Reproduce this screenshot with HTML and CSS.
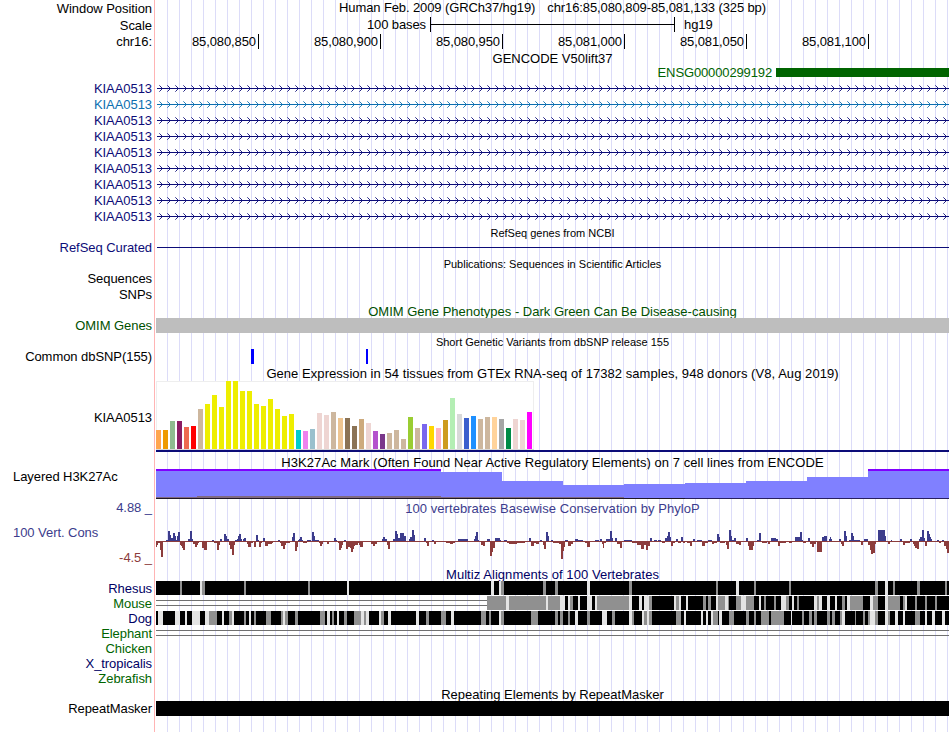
FILE: index.html
```
<!DOCTYPE html>
<html lang="en">
  <head>
    <meta charset="UTF-8" />
    <title>chr16:85,080,809-85,081,133 - Genome Browser</title>
    <link rel="stylesheet" href="styles.css" />
  </head>
  <body>
    <div class="browser">
      <div class="row h17">
        <div class="label">Window Position</div>
        <div class="data title position"><span>Human Feb. 2009 (GRCh37/hg19)</span><span>chr16:85,080,809-85,081,133 (325 bp)</span></div>
      </div>
      <div class="row h17">
        <div class="label">Scale</div>
        <div class="data scale">
          <span class="scale-name">100 bases</span>
          <span class="scale-bar"></span>
          <span>hg19</span>
        </div>
      </div>
      <div class="row h17">
        <div class="label up">chr16:</div>
        <div class="data ruler">
          <span class="first">85,080,850</span>
          <span>85,080,900</span>
          <span>85,080,950</span>
          <span>85,081,000</span>
          <span>85,081,050</span>
          <span>85,081,100</span>
        </div>
      </div>

      <div class="row h14"><div class="label"></div><div class="data title">GENCODE V50lift37</div></div>
      <div class="row h15">
        <div class="label"></div>
        <div class="data ensg"><span>ENSG00000299192</span><i></i></div>
      </div>
      <div id="genes"></div>

      <div class="row h17"><div class="label"></div><div class="data title small">RefSeq genes from NCBI</div></div>
      <div class="row h14">
        <div class="label navy up">RefSeq Curated</div>
        <div class="data refseq"><i></i></div>
      </div>
      <div class="row h17"><div class="label"></div><div class="data title small">Publications: Sequences in Scientific Articles</div></div>
      <div class="row h15"><div class="label up">Sequences</div><div class="data"></div></div>
      <div class="row h16"><div class="label up">SNPs</div><div class="data"></div></div>

      <div class="row h15"><div class="label"></div><div class="data title down omim-green">OMIM Gene Phenotypes - Dark Green Can Be Disease-causing</div></div>
      <div class="row h15">
        <div class="label omim-green">OMIM Genes</div>
        <div class="data omim"></div>
      </div>

      <div class="row h16"><div class="label"></div><div class="data title small down">Short Genetic Variants from dbSNP release 155</div></div>
      <div class="row h15">
        <div class="label">Common dbSNP(155)</div>
        <div class="data"><svg id="snps" width="793" height="15"></svg></div>
      </div>

      <div class="row h17"><div class="label"></div><div class="data title down wide">Gene Expression in 54 tissues from GTEx RNA-seq of 17382 samples, 948 donors (V8, Aug 2019)</div></div>
      <div class="row h73">
        <div class="label">KIAA0513</div>
        <div class="data"><svg id="gtex" width="793" height="73"></svg></div>
      </div>

      <div class="row h15"><div class="label"></div><div class="data title down wide">H3K27Ac Mark (Often Found Near Active Regulatory Elements) on 7 cell lines from ENCODE</div></div>
      <div class="row h30">
        <div class="label left h3k">Layered H3K27Ac</div>
        <div class="data"><svg id="h3k" width="793" height="30"></svg></div>
      </div>

      <div class="row h68">
        <div class="label limits">
          <span class="blue">4.88 _</span>
          <span class="blue left">100 Vert. Cons</span>
          <span class="maroon">-4.5 _</span>
        </div>
        <div class="data cons">
          <div class="title wide blue">100 vertebrates Basewise Conservation by PhyloP</div>
          <svg id="phylop" width="793" height="49"></svg>
        </div>
      </div>

      <div class="row h14"><div class="label"></div><div class="data title wide multiz">Multiz Alignments of 100 Vertebrates</div></div>
      <div class="row h15"><div class="label multiz">Rhesus</div><div class="data"><svg id="rhesus" width="793" height="15"></svg></div></div>
      <div class="row h15"><div class="label green">Mouse</div><div class="data"><svg id="mouse" width="793" height="15"></svg></div></div>
      <div class="row h15"><div class="label multiz">Dog</div><div class="data"><svg id="dog" width="793" height="15"></svg></div></div>
      <div class="row h15"><div class="label green">Elephant</div><div class="data"><svg id="elephant" width="793" height="15"></svg></div></div>
      <div class="row h15"><div class="label green">Chicken</div><div class="data"></div></div>
      <div class="row h15"><div class="label multiz">X_tropicalis</div><div class="data"></div></div>
      <div class="row h15"><div class="label green">Zebrafish</div><div class="data"></div></div>

      <div class="row h15"><div class="label"></div><div class="data title down">Repeating Elements by RepeatMasker</div></div>
      <div class="row h15">
        <div class="label">RepeatMasker</div>
        <div class="data repeat"></div>
      </div>
      <div class="row h16"><div class="label"></div><div class="data"></div></div>
    </div>
    <script src="tracks.js"></script>
  </body>
</html>
```

FILE: styles.css
```
body {
  margin: 0;
  background: #fff;
  font-family: "Liberation Sans", Arial, Helvetica, sans-serif;
  font-size: 13px;
  color: #000;
}
.browser {
  width: 949px;
  height: 732px;
  overflow: hidden;
}
.row {
  display: flex;
}
.label {
  box-sizing: border-box;
  width: 154px;
  padding-right: 2px;
  display: flex;
  align-items: center;
  justify-content: flex-end;
  letter-spacing: -0.06px;
  white-space: nowrap;
}
.label.left {
  justify-content: flex-start;
  padding-left: 13px;
}
.label.up {
  padding-bottom: 2px;
}
.data {
  box-sizing: border-box;
  width: 795px;
  padding-left: 1px;
  border-left: 1px solid #ffb4b4;
  background: repeating-linear-gradient(to right, transparent 0 11px, #dcdcf8 11px 12px) content-box;
  background-origin: content-box;
  white-space: nowrap;
}
.data svg {
  display: block;
}
.title {
  display: flex;
  align-items: center;
  justify-content: center;
}
/* line box is moved, the guide lines behind it stay full height */
.title.down {
  line-height: 17px;
  align-items: flex-start;
}
.title.wide {
  letter-spacing: 0.055px;
}
.position {
  gap: 12px;
  letter-spacing: -0.11px;
  line-height: 15px;
  align-items: flex-start;
}
.small {
  font-size: 11px;
}
.h14 { height: 14px; }
.h15 { height: 15px; }
.h16 { height: 16px; }
.h17 { height: 17px; }
.h30 { height: 30px; }
.h68 { height: 68px; }
.h73 { height: 73px; }
.h17 .title.down { line-height: 19px; }
.h16 .title.down { line-height: 18px; }

/* label colours */
.navy { color: #0c0c78; }
.light-blue { color: #0c6fb0; }
.omim-green { color: #005000; }
.green { color: #006400; }
.multiz { color: #000064; }
.blue { color: #3c3c8c; }
.maroon { color: #8c3c3c; }

/* scale and ruler */
.scale {
  display: flex;
  align-items: flex-start;
  line-height: 15px;
  letter-spacing: -0.1px;
}
.scale-name {
  width: 270px;
  text-align: right;
}
.scale-bar {
  box-sizing: border-box;
  width: 245px;
  height: 15px;
  margin: 0 9px 0 4px;
  border: solid #000;
  border-width: 0 1px;
  background: linear-gradient(#000, #000) 0 7px / 100% 1px no-repeat;
}
.ruler {
  display: flex;
  align-items: flex-start;
}
.ruler span {
  box-sizing: border-box;
  width: 122px;
  height: 15px;
  line-height: 16px;
  padding-right: 2px;
  border-right: 1px solid #000;
  letter-spacing: -0.1px;
  text-align: right;
}
.ruler .first {
  width: 103px;
}

/* gene tracks */
.ensg {
  display: flex;
  align-items: center;
  color: #006400;
}
.ensg span {
  width: 616px;
  letter-spacing: -0.13px;
  text-align: right;
}
.ensg i {
  width: 173px;
  height: 9px;
  margin-left: 4px;
  background: #006400;
}
.refseq {
  display: flex;
  align-items: flex-start;
}
.refseq i {
  width: 792px;
  height: 1px;
  margin: 6px 0 0 1px;
  background: #0c0c78;
}
.omim {
  background: #bebebe content-box;
}
.repeat {
  background: #000 content-box;
}
.h3k {
  padding-bottom: 16px;
}

/* conservation */
.limits {
  flex-direction: column;
  align-items: flex-end;
  justify-content: flex-start;
  padding-top: 1px;
  line-height: 15px;
}
.limits .left {
  align-self: flex-start;
  margin: 10px 0 10px 13px;
}
.cons .title {
  height: 19px;
}
```

FILE: tracks.js
```
const NS = "http://www.w3.org/2000/svg";

function rect(svg, x, y, w, h, fill, opacity) {
  const r = document.createElementNS(NS, "rect");
  r.setAttribute("x", x);
  r.setAttribute("y", y);
  r.setAttribute("width", w);
  r.setAttribute("height", h);
  r.setAttribute("fill", fill);
  if (opacity) r.setAttribute("opacity", opacity);
  svg.appendChild(r);
}

function get(id) {
  return document.getElementById(id);
}

// "x,w,h x,w,h" -> [[x, w, h], ...]
function parse(text) {
  return text.trim().split(/\s+/).map((item) => item.split(",").map(Number));
}

// KIAA0513 transcripts: intron line with strand arrows every 8px
function drawGenes() {
  for (let i = 0; i < 9; i++) {
    const cls = i === 1 ? "light-blue" : "navy";
    const row = document.createElement("div");
    row.className = "row h16 " + cls;
    row.innerHTML = `<div class="label">KIAA0513</div><div class="data"><svg width="793" height="16"></svg></div>`;
    const svg = row.querySelector("svg");
    rect(svg, 1, 8, 792, 1, "currentColor");
    for (let x = 6; x < 793; x += 8) {
      for (let d = 1; d <= 3; d++) {
        const opacity = d === 3 ? 0.6 : 0.9;
        rect(svg, x - d, 8 - d, 1, 1, "currentColor", opacity);
        rect(svg, x - d, 8 + d, 1, 1, "currentColor", opacity);
      }
    }
    get("genes").appendChild(row);
  }
}

function drawGtex() {
  const svg = get("gtex");
  const tan = "#cdb79e";
  const pink = "#eed5d2";
  const yellow = "#eeee00";
  const colors = ["#ffa54f", "#ee9a00", "#8fbc8f", "#8b1c62", "#ee6a50", "#ff0000", tan]
    .concat(Array(13).fill(yellow))
    .concat(["#00cdcd", "#ee82ee", "#9ac0cd", pink, pink, tan, "#eec591", "#8b7355", "#8b7355", "#cdaa7d", pink])
    .concat(["#b452cd", "#7a378b", tan, tan, tan, "#9acd32", tan, "#7a67ee", "#ffd700", "#ffb6c1", "#cd9b1d"])
    .concat(["#b4eeb4", "#d9d9d9", "#3a5fcd", "#1e90ff", tan, tan, "#ffd39b", "#a6a6a6", "#008b45", pink, pink, "#ff00ff"]);
  const heights = [
    19, 19, 28, 28, 22, 23, 40, 45, 54, 42, 68, 68, 58, 58, 45, 43, 50, 40,
    33, 35, 19, 18, 20, 36, 34, 37, 31, 31, 23, 30, 26, 18, 15, 16, 19, 10,
    32, 21, 25, 23, 21, 29, 51, 35, 31, 33, 30, 32, 32, 30, 21, 30, 29, 37,
  ];
  rect(svg, 0, 0, 378, 69, "#eeeeee");
  rect(svg, 1, 1, 376, 67, "#ffffff");
  rect(svg, 0, 68, 378, 1, "#d8d8d8");
  heights.forEach((h, i) => rect(svg, i * 7, 68 - h, 5, h, colors[i]));
  rect(svg, 0, 69, 793, 2, "#0c0c78");
}

function drawH3k() {
  const svg = get("h3k");
  const steps = parse("0,285,29 285,61,26 346,61,17 407,61,13 468,61,14 529,61,15 590,61,17 651,61,21 712,81,29");
  steps.forEach(([x, w, h]) => {
    rect(svg, x, 29 - h, w, h, "#8080ff");
    if (h === 29) rect(svg, x, 0, w, 2, "#8000ff");
  });
  rect(svg, 0, 28, 41, 1, "#806a80");
  rect(svg, 41, 27, 244, 2, "#806a80");
  rect(svg, 285, 28, 183, 1, "#806a80");
  rect(svg, 0, 29, 529, 1, "#201828");
  rect(svg, 529, 29, 264, 1, "#282060");
}

function drawPhylop() {
  const svg = get("phylop");
  const zero = 23;
  const scores = parse(`
    0,1,-6 1,1,-4 2,2,-2 4,1,-9 5,2,-16 10,2,1 12,2,10 14,1,6 15,2,3 17,2,8 19,1,5 20,1,1 21,1,5 22,2,9
    24,1,-4 25,1,-5 26,1,-7 27,2,-9 32,2,2 34,2,10 36,1,2 37,2,-3 39,2,-6 41,1,-4 42,1,-2 46,2,-7 48,3,-9
    56,2,1 58,3,-2 61,2,-9 63,1,-4 64,2,2 68,2,7 70,1,5 71,2,2 73,1,-4 74,2,-8 76,2,-14 78,1,-4 79,2,1
    81,1,2 82,1,5 83,2,7 85,1,2 87,1,2 88,2,3 91,1,-3 92,3,-6 95,2,-2 98,2,-6 100,2,6 102,1,1 103,2,-6
    105,1,-2 107,2,3 109,3,-5 112,4,-3 116,1,-2 122,2,1 124,1,-2 125,2,-5 127,2,-8 129,1,-4 130,4,-2
    136,1,4 137,2,8 139,2,-10 141,1,-6 142,1,1 143,1,2 144,2,4 146,1,1 147,4,-2 151,4,1 156,2,9 158,1,5
    159,4,1 163,1,-2 164,2,-5 166,1,-3 171,2,-3 178,2,3 180,1,1 182,1,-2 183,2,-9 185,1,-7 186,1,-4
    188,2,1 190,2,-8 192,2,-6 194,1,-7 195,2,-11 197,1,-8 198,1,-5 199,3,-4 202,1,-2 203,1,-4 204,3,-6
    215,2,-3 217,2,-5 219,2,-3 226,1,2 227,2,4 229,2,2 231,1,-4 232,2,-8 237,2,2 239,2,10 241,1,7
    242,2,3 244,4,8 248,2,5 253,1,2 254,2,4 256,2,11 258,1,6 268,2,3 270,1,-2 271,2,-5 276,2,1 278,2,-3
    290,4,-2 294,3,-3 297,2,-2 302,10,2 318,1,2 319,1,5 320,2,9 322,1,1 325,2,-4 327,2,-5 331,3,2
    334,2,-15 336,1,-11 337,2,-7 339,5,3 344,1,1 348,3,1 351,2,-2 353,8,-3 361,8,-2 373,2,3 375,3,-5
    378,2,-2 380,3,-3 384,2,1 387,1,-4 388,2,-8 390,2,9 392,1,5 395,2,1 397,6,-2 403,2,-3 405,2,-18
    407,1,-10 408,1,-6 409,3,1 412,3,-5 415,2,-3 419,3,2 422,5,1 429,2,-2 431,3,-6 439,4,1 444,2,2
    446,1,-3 447,1,-7 448,2,-2 450,4,2 454,2,10 456,1,3 459,2,3 461,3,-3 464,2,-7 468,8,1 476,5,-2
    481,4,-4 485,3,-8 488,2,-4 490,2,-9 492,2,-5 494,2,3 498,3,1 502,3,1 506,3,-2 509,2,3 511,1,5
    512,2,9 514,1,4 515,2,-5 517,2,-2 520,2,2 522,3,-2 525,2,4 527,2,-2 531,3,-2 534,2,-5 537,2,2
    541,5,1 546,3,-5 549,3,-2 552,4,1 556,2,-3 558,3,-2 561,2,7 563,1,4 564,5,-2 570,1,-4 571,2,-8
    573,2,11 575,1,5 576,2,1 578,2,3 580,3,-3 583,2,-4 590,2,3 592,1,-5 593,4,-9 597,1,-5 601,2,1
    603,2,8 606,5,-2 612,2,-3 615,5,3 620,2,2 622,2,-5 624,6,-2 633,3,-2 639,5,4 644,2,9 646,1,1
    647,3,-2 652,2,3 654,2,-3 656,2,-6 658,2,-3 661,5,-11 666,2,4 668,3,5 673,1,2 674,1,4 675,1,2
    676,7,-1 683,2,2 685,1,-3 686,2,-5 688,2,10 690,1,5 693,2,1 695,2,8 697,1,5 698,6,1 705,2,-4
    708,4,2 712,2,-4 714,1,-9 715,2,-13 717,2,-12 719,1,-3 722,7,11 729,1,5 730,2,-1 732,2,-3 735,1,1
    744,2,2 747,2,-4 749,5,-2 754,2,2 757,1,-3 758,1,-5 759,2,-7 761,2,-8 763,1,2 764,2,4 766,2,11
    768,1,3 769,2,-5 771,2,10 773,1,7 774,1,4 775,1,2 777,5,-1 781,2,1 783,2,-2 786,2,1 788,2,-5
    790,1,-8 791,2,-12`);
  rect(svg, 0, zero, 793, 1, "#8c3c3c");
  scores.forEach(([x, w, s]) => {
    if (s > 0) rect(svg, x, zero - s, w, s, "#3c3c8c");
    else rect(svg, x, zero, w, -s, "#8c3c3c");
  });
}

// pairwise alignment: black where aligned, grey and light columns on top
function drawAlignment(id, start, grey, light) {
  const svg = get(id);
  if (start > 0) {
    rect(svg, 0, 4, start, 1, "#707070");
    rect(svg, 0, 9, start, 1, "#707070");
  }
  rect(svg, start, 0, 793 - start, 14, "#000000");
  parse(grey).forEach(([x, w]) => rect(svg, x, 0, w, 14, "#909090"));
  parse(light).forEach(([x, w]) => rect(svg, x, 0, w, 14, "#e4e4e4"));
}

drawGenes();
rect(get("snps"), 95, 0, 3, 15, "#0000ff");
rect(get("snps"), 210, 0, 2, 15, "#0000ff");
drawGtex();
drawH3k();
drawPhylop();

drawAlignment("rhesus", 0,
  "24,2 46,3 88,2 152,2 345,3 387,3 399,3 473,3 560,2 598,2 633,2 719,3 737,2 761,3 789,2",
  "44,2 191,2 335,3 343,2 431,3 580,3 729,3");
drawAlignment("mouse", 331,
  `331,19 353,37 392,12 414,3 441,32 493,3 520,3 547,3 552,3 562,7 572,1 580,5 590,8 608,2 618,2
   630,3 641,2 661,2 686,3 694,13 717,5 732,12 747,2 759,2 769,2 779,2`,
  `350,3 390,2 404,5 412,2 422,2 431,5 439,2 473,3 483,3 488,5 518,2 523,2 530,2 560,2 569,3 585,5
   603,2 625,5 636,2 658,3 663,3 671,3 679,2 691,3 714,3 729,3 749,2`);
drawAlignment("dog", 0,
  `53,8 73,3 88,2 98,2 110,5 125,2 129,3 139,3 164,5 176,2 188,3 198,7 208,2 225,3 270,3 285,5
   325,5 333,2 345,3 375,7 399,3 404,3 412,2 431,3 456,3 476,2 488,3 493,3 520,5 557,5 573,5 590,3
   598,2 605,8 615,13 646,2 653,3 658,3 671,3 676,3 684,2 699,1 707,2 712,2 719,3 732,2 759,5`,
  `2,5 19,5 29,2 36,8 49,4 66,2 76,2 93,2 127,2 171,3 181,2 205,3 210,3 223,2 232,3 260,3 295,3
   343,2 419,3 446,5 473,3 486,2 491,2 528,2 545,2 550,2 555,2 563,3 635,1 686,3 714,5 729,3 739,3
   747,2 769,2 776,3 786,3`);
rect(get("elephant"), 0, 4, 793, 1, "#707070");
rect(get("elephant"), 0, 9, 793, 1, "#707070");
```
